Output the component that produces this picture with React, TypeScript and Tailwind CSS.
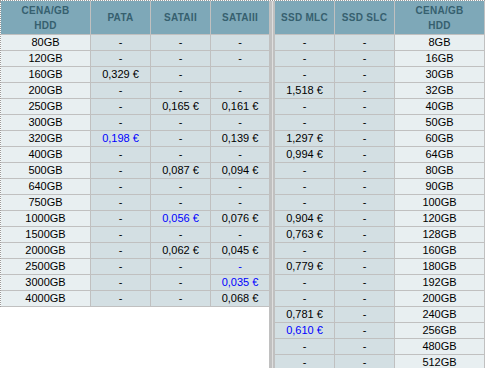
import React from "react";

type Row = string[];

const LEFT: Row[] = [
  ["80GB", "-", "-", "-"],
  ["120GB", "-", "-", "-"],
  ["160GB", "0,329 €", "-", ""],
  ["200GB", "-", "-", "-"],
  ["250GB", "-", "0,165 €", "0,161 €"],
  ["300GB", "-", "-", "-"],
  ["320GB", "*0,198 €", "-", "0,139 €"],
  ["400GB", "-", "-", "-"],
  ["500GB", "-", "0,087 €", "0,094 €"],
  ["640GB", "-", "-", "-"],
  ["750GB", "-", "-", "-"],
  ["1000GB", "-", "*0,056 €", "0,076 €"],
  ["1500GB", "-", "-", "-"],
  ["2000GB", "-", "0,062 €", "0,045 €"],
  ["2500GB", "-", "-", "*-"],
  ["3000GB", "-", "-", "*0,035 €"],
  ["4000GB", "-", "-", "0,068 €"],
];

const RIGHT: Row[] = [
  ["-", "-", "8GB"],
  ["-", "-", "16GB"],
  ["-", "-", "30GB"],
  ["1,518 €", "-", "32GB"],
  ["-", "-", "40GB"],
  ["-", "-", "50GB"],
  ["1,297 €", "-", "60GB"],
  ["0,994 €", "-", "64GB"],
  ["-", "-", "80GB"],
  ["-", "-", "90GB"],
  ["-", "-", "100GB"],
  ["0,904 €", "-", "120GB"],
  ["0,763 €", "-", "128GB"],
  ["-", "-", "160GB"],
  ["0,779 €", "-", "180GB"],
  ["-", "-", "192GB"],
  ["-", "-", "200GB"],
  ["0,781 €", "-", "240GB"],
  ["*0,610 €", "-", "256GB"],
  ["-", "-", "480GB"],
  ["-", "-", "512GB"],
];

function Val({ v }: { v: string }) {
  if (v.startsWith("*")) {
    return <span className="text-[#0000ff]">{v.slice(1)}</span>;
  }
  return <span>{v}</span>;
}

const HEAD =
  "flex items-center justify-center text-center font-bold text-[10px] leading-[15px] tracking-[0.3px] text-[#36606f] bg-[#7ea8b8]";
const CELL = "flex items-center justify-center text-[11px] leading-[15px] text-black";

export default function App() {
  return (
    <div
      className="w-[485px] h-[368px] overflow-hidden bg-white border-t border-dotted border-[#9a9a9a] flex items-stretch"
      style={{ fontFamily: '"Liberation Sans", Arial, sans-serif' }}
    >
      {/* left table */}
      <div className="w-[269px] self-start border-l border-dotted border-[#9a9a9a] bg-white">
        <div className="flex h-[34px] border-b border-[#c0c0c0]">
          <div className={`${HEAD} w-[90px] border-r border-[#c0c0c0]`}>
            CENA/GB
            <br />
            HDD
          </div>
          <div className={`${HEAD} w-[60px] border-r border-[#c0c0c0]`}>PATA</div>
          <div className={`${HEAD} w-[60px] border-r border-[#c0c0c0]`}>SATAII</div>
          <div className={`${HEAD} w-[58px]`}>SATAIII</div>
        </div>
        {LEFT.map((r, i) => (
          <div key={i} className="flex h-4 border-b border-[#c0c0c0]">
            <div className={`${CELL} w-[90px] border-r border-[#c0c0c0] bg-[#e8eff1]`}>
              <Val v={r[0]} />
            </div>
            <div className={`${CELL} w-[60px] border-r border-[#c0c0c0] bg-[#d3dfe3]`}>
              <Val v={r[1]} />
            </div>
            <div className={`${CELL} w-[60px] border-r border-[#c0c0c0] bg-[#d3dfe3]`}>
              <Val v={r[2]} />
            </div>
            <div className={`${CELL} w-[58px] bg-[#d3dfe3]`}>
              <Val v={r[3]} />
            </div>
          </div>
        ))}
      </div>

      {/* separator */}
      <div className="flex w-[6px] shrink-0">
        <div className="w-[3px] bg-[#c0c0c0]" />
        <div className="w-px bg-[#dedede]" />
        <div className="w-[2px] bg-[#c0c0c0]" />
      </div>

      {/* right table */}
      <div className="w-[210px] self-start">
        <div className="flex h-[34px] border-b border-[#c0c0c0]">
          <div className={`${HEAD} w-[60px] border-r border-[#c0c0c0]`}>SSD MLC</div>
          <div className={`${HEAD} w-[60px] border-r border-[#c0c0c0]`}>SSD SLC</div>
          <div className={`${HEAD} w-[90px] border-r border-[#c0c0c0]`}>
            CENA/GB
            <br />
            HDD
          </div>
        </div>
        {RIGHT.map((r, i) => (
          <div key={i} className="flex h-4 border-b border-[#c0c0c0]">
            <div className={`${CELL} w-[60px] border-r border-[#c0c0c0] bg-[#d3dfe3]`}>
              <Val v={r[0]} />
            </div>
            <div className={`${CELL} w-[60px] border-r border-[#c0c0c0] bg-[#d3dfe3]`}>
              <Val v={r[1]} />
            </div>
            <div className={`${CELL} w-[90px] border-r border-[#c0c0c0] bg-[#e8eff1]`}>
              <Val v={r[2]} />
            </div>
          </div>
        ))}
      </div>
    </div>
  );
}
